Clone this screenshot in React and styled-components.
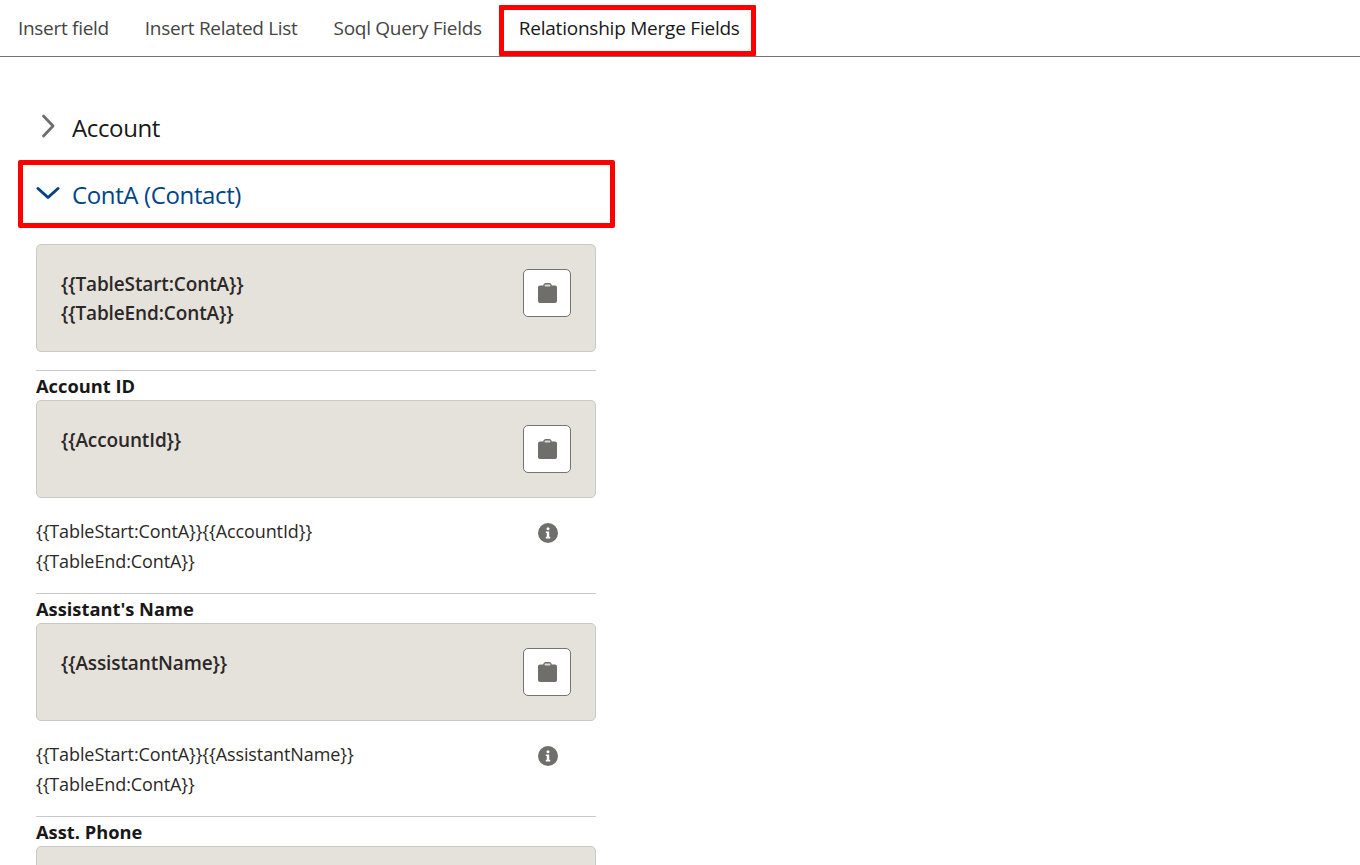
import React from 'react';
import styled, { createGlobalStyle } from 'styled-components';

const GlobalStyle = createGlobalStyle`
  html, body {
    margin: 0;
    height: 100%;
    overflow: hidden;
    background: #fff;
    font-family: "Open Sans", "Noto Sans", "Liberation Sans", sans-serif;
    color: #181818;
  }
`;

const fields = [
  { label: 'Account ID', code: 'AccountId' },
  { label: "Assistant's Name", code: 'AssistantName' },
];

const ClipboardIcon = () => (
  <svg width="19" height="20" viewBox="0 0 19 20" aria-hidden="true">
    <path
      fill="#706e6b"
      d="M2 2.500h3.200C5.400 1 6.400 0 7.800 0h3.400c1.400 0 2.400 1 2.600 2.500H17c1.100 0 2 .9 2 2V18c0 1.100-.9 2-2 2H2c-1.100 0-2-.9-2-2V4.500c0-1.100.9-2 2-2z"
    />
    <rect x="6.500" y="1.600" width="6" height="2" rx="1" fill="#d9d8d6" />
  </svg>
);

const InfoIcon = () => (
  <svg width="20" height="20" viewBox="0 0 20 20" aria-hidden="true">
    <circle cx="10" cy="10" r="10" fill="#706e6b" />
    <circle cx="10" cy="5.800" r="1.500" fill="#fff" />
    <path fill="#fff" d="M7.800 8.400h3.400v5.400h1v1.600H7.800v-1.600h1v-3.800h-1z" />
  </svg>
);

const Chevron = ({ open }) =>
  open ? (
    <svg width="24" height="14" viewBox="0 0 24 14" fill="none" aria-hidden="true">
      <path d="M2 2.500l10 9 10-9" stroke="#014486" strokeWidth="3" strokeLinecap="round" strokeLinejoin="round" />
    </svg>
  ) : (
    <svg width="14" height="24" viewBox="0 0 14 24" fill="none" aria-hidden="true">
      <path d="M2.500 2l9.500 10-9.500 10" stroke="#706e6b" strokeWidth="2.800" strokeLinecap="round" strokeLinejoin="round" />
    </svg>
  );

export default function App() {
  return (
    <>
      <GlobalStyle />
      <TabBar>
        <Tab>Insert field</Tab>
        <Tab>Insert Related List</Tab>
        <Tab>Soql Query Fields</Tab>
        <Tab $active>Relationship Merge Fields</Tab>
      </TabBar>
      <Content>
        <SectionHeader>
          <Chevron />
          <SectionTitle>Account</SectionTitle>
        </SectionHeader>
        <SectionHeader $open>
          <Chevron open />
          <SectionTitle $open>ContA (Contact)</SectionTitle>
        </SectionHeader>
        <FieldList>
          <MergeBox $first>
            <div>
              <MergeCode>{'{{TableStart:ContA}}'}</MergeCode>
              <MergeCode>{'{{TableEnd:ContA}}'}</MergeCode>
            </div>
            <CopyButton>
              <ClipboardIcon />
            </CopyButton>
          </MergeBox>
          {fields.map((field) => (
            <Field key={field.code}>
              <FieldLabel>{field.label}</FieldLabel>
              <MergeBox>
                <MergeCode>{`{{${field.code}}}`}</MergeCode>
                <CopyButton>
                  <ClipboardIcon />
                </CopyButton>
              </MergeBox>
              <UsageRow>
                <UsageText>
                  <div>{`{{TableStart:ContA}}{{${field.code}}}`}</div>
                  <div>{'{{TableEnd:ContA}}'}</div>
                </UsageText>
                <InfoIcon />
              </UsageRow>
            </Field>
          ))}
          <Field>
            <FieldLabel>Asst. Phone</FieldLabel>
            <MergeBox />
          </Field>
        </FieldList>
      </Content>
    </>
  );
}

const TabBar = styled.div`
  display: flex;
  height: 56px;
  border-bottom: 1px solid #747474;
`;

const Tab = styled.div`
  box-sizing: border-box;
  display: flex;
  align-items: center;
  height: 51px;
  margin-top: 5px;
  padding: 0 18px 6px;
  font-size: 19px;
  letter-spacing: -0.3px;
  white-space: nowrap;
  color: ${(props) => (props.$active ? '#181818' : '#444444')};
  ${(props) =>
    props.$active &&
    'border: 5px solid #ff0000; margin-left: -1px; padding: 0 10px 6px 15px; border-radius: 1px; width: 257px; letter-spacing: -0.23px;'}
`;

const Content = styled.div`
  padding: 36px 0 0 18px;
`;

const SectionHeader = styled.div`
  box-sizing: border-box;
  display: flex;
  align-items: center;
  width: 597px;
  height: ${(props) => (props.$open ? '68px' : '67px')};
  padding-left: ${(props) => (props.$open ? '13px' : '23px')};
  gap: ${(props) => (props.$open ? '12px' : '17px')};
  padding-bottom: ${(props) => (props.$open ? '2px' : '1px')};
  ${(props) => props.$open && 'border: 5px solid #ff0000; border-radius: 2px;'}
`;

const SectionTitle = styled.span`
  margin-top: 2px;
  font-size: 24px;
  letter-spacing: -0.37px;
  color: ${(props) => (props.$open ? '#014486' : '#181818')};
`;

const FieldList = styled.div`
  width: 560px;
  margin: 16px 0 0 18px;
`;

const Field = styled.section`
  border-top: 1px solid #c9c9c9;
`;

const MergeBox = styled.div`
  box-sizing: border-box;
  display: flex;
  justify-content: space-between;
  height: ${(props) => (props.$first ? '108px' : '98px')};
  margin-bottom: ${(props) => (props.$first ? '18px' : '0')};
  padding: 25px 24px 0 24px;
  background: #e5e2dc;
  border: 1px solid #c9c9c9;
  border-radius: 5px;
`;

const MergeCode = styled.div`
  font-size: 19px;
  font-weight: 600;
  line-height: 29px;
  letter-spacing: -0.12px;
  color: #2b2826;
`;

const CopyButton = styled.button`
  box-sizing: border-box;
  display: flex;
  align-items: center;
  justify-content: center;
  width: 48px;
  height: 48px;
  margin-top: -1px;
  padding: 0;
  background: #fff;
  border: 1px solid #747474;
  border-radius: 5px;
`;

const FieldLabel = styled.div`
  height: 29px;
  font-size: 18.3px;
  font-weight: 700;
  line-height: 29px;
  color: #181818;
`;

const UsageRow = styled.div`
  box-sizing: border-box;
  display: flex;
  justify-content: space-between;
  height: 95px;
  padding: 18px 38px 0 0;
  svg {
    margin-top: 7px;
  }
`;

const UsageText = styled.div`
  font-size: 18px;
  line-height: 30px;
  letter-spacing: -0.1px;
  color: #2b2826;
`;
